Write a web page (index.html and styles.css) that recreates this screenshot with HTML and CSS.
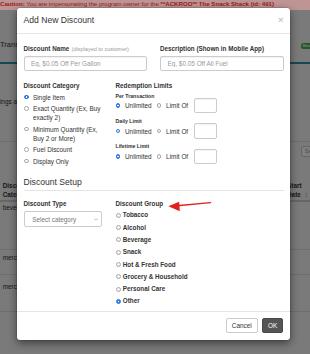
FILE: index.html
```html
<!DOCTYPE html>
<html lang="en">
<head>
  <meta charset="UTF-8" />
  <title>Discounts - Add New Discount</title>
  <link rel="stylesheet" href="styles.css">
</head>
<body>
  <div class="caution"><b>Caution:</b> You are impersonating the program owner for the <b>**ACKROO** The Snack Shack (id: 491)</b></div>
  <div class="tabs">
    <span class="tab">Transactions</span>
    <span class="badge">New</span>
  </div>
  <div class="subbar">Listings and Settings</div>
  <div class="filter">
    <div class="search">Search</div>
  </div>
  <div class="grid-head">
    <div>Discount<br>Category</div>
    <div class="sort">Start<br>Date <span class="sort-icon">&#8597;</span></div>
  </div>
  <div class="grid-row r1">beverage</div>
  <div class="grid-row r2">merchandise</div>
  <div class="grid-row r3">merchandise</div>

  <div class="backdrop"></div>

  <div class="modal">
    <div class="modal-header">
      <div class="modal-title">Add New Discount</div>
      <span class="close">&times;</span>
    </div>
    <div class="modal-body">
      <div class="cols-2">
        <div>
          <label class="field-label">Discount Name <small>(displayed to customer)</small></label>
          <input class="field" type="text" placeholder="Eg, $0.05 Off Per Gallon">
        </div>
        <div>
          <label class="field-label">Description (Shown in Mobile App)</label>
          <input class="field" type="text" placeholder="Eg, $0.05 Off All Fuel">
        </div>
      </div>

      <div class="cols-split">
        <div>
          <label class="field-label">Discount Category</label>
          <div class="radio-list">
            <label class="radio"><input type="radio" name="cat" checked><span>Single Item</span></label>
            <label class="radio"><input type="radio" name="cat"><span>Exact Quantity (Ex, Buy exactly 2)</span></label>
            <label class="radio"><input type="radio" name="cat"><span>Minimum Quantity (Ex, Buy 2 or More)</span></label>
            <label class="radio"><input type="radio" name="cat"><span>Fuel Discount</span></label>
            <label class="radio"><input type="radio" name="cat"><span>Display Only</span></label>
          </div>
        </div>
        <div>
          <label class="field-label">Redemption Limits</label>
          <div class="limits">
            <div class="limit">
              <div class="limit-label">Per Transaction</div>
              <div class="limit-row">
                <label class="inline"><input type="radio" name="per" checked>Unlimited</label>
                <label class="inline"><input type="radio" name="per">Limit Of</label>
                <input class="limit-input" type="text">
              </div>
            </div>
            <div class="limit">
              <div class="limit-label">Daily Limit</div>
              <div class="limit-row">
                <label class="inline"><input type="radio" name="day" checked>Unlimited</label>
                <label class="inline"><input type="radio" name="day">Limit Of</label>
                <input class="limit-input" type="text">
              </div>
            </div>
            <div class="limit">
              <div class="limit-label">Lifetime Limit</div>
              <div class="limit-row">
                <label class="inline"><input type="radio" name="life" checked>Unlimited</label>
                <label class="inline"><input type="radio" name="life">Limit Of</label>
                <input class="limit-input" type="text">
              </div>
            </div>
          </div>
        </div>
      </div>

      <h4 class="section-title">Discount Setup</h4>

      <div class="cols-split">
        <div>
          <label class="field-label">Discount Type</label>
          <div class="select">
            <span>Select category</span>
            <svg width="4" height="3" viewBox="0 0 4 3"><path d="M0.4 0.6 L2 2.2 L3.6 0.6" fill="none" stroke="#8a8a8a" stroke-width="0.6"/></svg>
          </div>
        </div>
        <div>
          <label class="field-label">Discount Group</label>
          <div class="group-list">
            <label class="group-opt"><input type="radio" name="grp"><span>Tobacco</span></label>
            <label class="group-opt"><input type="radio" name="grp"><span>Alcohol</span></label>
            <label class="group-opt"><input type="radio" name="grp"><span>Beverage</span></label>
            <label class="group-opt"><input type="radio" name="grp"><span>Snack</span></label>
            <label class="group-opt"><input type="radio" name="grp"><span>Hot &amp; Fresh Food</span></label>
            <label class="group-opt"><input type="radio" name="grp"><span>Grocery &amp; Household</span></label>
            <label class="group-opt"><input type="radio" name="grp"><span>Personal Care</span></label>
            <label class="group-opt"><input type="radio" name="grp" checked><span>Other</span></label>
          </div>
        </div>
      </div>
    </div>
    <div class="modal-footer">
      <button class="btn">Cancel</button>
      <button class="btn btn-dark">OK</button>
    </div>
  </div>

  <svg class="arrow" width="46" height="14" viewBox="0 0 46 14">
    <line x1="44.5" y1="3.6" x2="11" y2="6.8" stroke="#e3211c" stroke-width="1.4" stroke-linecap="round"/>
    <polygon points="2.3,7.3 13.2,2.8 13.8,12.2" fill="#e3211c"/>
  </svg>
</body>
</html>
```

FILE: styles.css
```css
* {
  box-sizing: border-box;
}
body {
  margin: 0;
  width: 310px;
  height: 354px;
  overflow: hidden;
  position: relative;
  font-family: "Liberation Sans", Arial, sans-serif;
  font-size: 6.4px;
  color: #333;
  background: #f4f4f4;
}

/* page behind the modal */
.caution {
  position: relative;
  z-index: 2;
  height: 9.5px;
  font-size: 6.1px;
  line-height: 7px;
  background: #bf9494;
  color: #951c1c;
  white-space: nowrap;
  overflow: hidden;
}
.tabs {
  height: 54.5px;
  padding-top: 16.5px;
  display: flex;
  justify-content: space-between;
  align-items: center;
  border-bottom: 2px solid #2f93a8;
}
.tab {
  font-size: 7.5px;
  line-height: 9px;
}
.badge {
  background: #4cae4c;
  color: #fff;
  font-size: 4px;
  font-weight: bold;
  padding: 0.5px 2px;
  border-radius: 2.5px;
  margin-right: -3px;
  margin-top: 3px;
}
.subbar {
  height: 78px;
  padding-top: 34px;
  line-height: 8px;
  margin-left: -10px;
  border-bottom: 1px solid #ddd;
}
.filter {
  height: 28px;
  padding-top: 4px;
  display: flex;
  justify-content: flex-end;
}
.search {
  width: 30px;
  height: 11px;
  margin-right: -21px;
  border: 1px solid #ccc;
  border-radius: 2px;
  background: #fff;
  color: #999;
  font-size: 5.5px;
  line-height: 9px;
  padding-left: 3px;
}
.grid-head {
  display: grid;
  grid-template-columns: 1fr 23px;
  height: 32px;
  align-items: end;
  font-weight: bold;
  line-height: 8.8px;
  padding-left: 2.7px;
  border-bottom: 2px solid #ccc;
}
.sort-icon {
  color: #999;
  font-weight: normal;
  margin-left: 2px;
}
.grid-row {
  padding-left: 2.7px;
  line-height: 7px;
  border-bottom: 1px solid #ddd;
}
.r1 {
  height: 48px;
  padding-top: 1.5px;
}
.r2 {
  height: 25px;
  padding-top: 4px;
}
.r3 {
  height: 37px;
  padding-top: 7.5px;
}

.backdrop {
  position: absolute;
  inset: 0;
  background: rgba(0, 0, 0, 0.5);
  z-index: 1;
}

/* modal */
.modal {
  position: absolute;
  left: 17px;
  top: 8px;
  width: 273px;
  background: #fff;
  border-radius: 3px;
  box-shadow: 0 3px 9px rgba(0, 0, 0, 0.5), 0 0 0 0.5px rgba(0, 0, 0, 0.2);
  z-index: 3;
}
.modal-header {
  display: flex;
  justify-content: space-between;
  align-items: center;
  padding: 6.4px 6.5px;
  border-bottom: 1px solid #e5e5e5;
}
.modal-title {
  font-size: 8.6px;
  line-height: 12px;
}
.close {
  font-size: 9.5px;
  font-weight: bold;
  line-height: 12px;
  color: #c8c8c8;
}
.modal-body {
  padding: 10.9px 6.5px 4.8px;
}
.field-label {
  display: block;
  font-size: 6.3px;
  font-weight: bold;
  line-height: 8.7px;
  margin-bottom: 2.2px;
}
.field-label small {
  font-size: 5.5px;
  font-weight: normal;
  color: #999;
  margin-left: 0.6px;
}
.field {
  display: block;
  width: 100%;
  height: 15.4px;
  border: 1px solid #ccc;
  border-radius: 2px;
  padding: 0 6.5px;
  font-family: inherit;
  font-size: 6.4px;
  color: #555;
  box-shadow: inset 0 1px 1px rgba(0, 0, 0, 0.05);
}
.field::placeholder {
  color: #999;
}
.cols-2 {
  display: grid;
  grid-template-columns: 1fr 1fr;
  column-gap: 13px;
  margin-bottom: 10.7px;
}
.cols-split {
  display: grid;
  grid-template-columns: 80px 1fr;
  column-gap: 12px;
}

input[type="radio"] {
  appearance: none;
  margin: 0;
  flex: none;
  width: 4.7px;
  height: 4.7px;
  border: 0.6px solid #a8a8a8;
  border-radius: 50%;
  background: #fff;
}
input[type="radio"]:checked {
  border-color: #2a72e6;
  background: radial-gradient(circle, #fff 0 0.75px, #2f80f2 1px);
}

.radio-list {
  display: flex;
  flex-direction: column;
  gap: 2.5px;
  margin-top: 1.9px;
}
.radio {
  display: flex;
  align-items: flex-start;
  line-height: 9px;
}
.radio input {
  margin: 2.15px 4.15px 0 0.6px;
}

.limits {
  margin-top: 1.2px;
}
.limit + .limit {
  margin-top: 4.5px;
}
.limit-label {
  font-size: 5.2px;
  font-weight: bold;
  line-height: 7px;
}
.limit-row {
  display: flex;
  align-items: center;
  height: 15.4px;
  margin-top: -1.5px;
}
.inline {
  display: flex;
  align-items: center;
  gap: 4.8px;
  margin-right: 5px;
}
.limit-input {
  width: 22.4px;
  height: 15.4px;
  margin-left: 1px;
  border: 1px solid #ccc;
  border-radius: 2px;
  box-shadow: inset 0 1px 1px rgba(0, 0, 0, 0.05);
}

.section-title {
  margin: 11.5px 0 9.1px;
  font-size: 8.6px;
  font-weight: normal;
  line-height: 10px;
  padding-bottom: 3.3px;
  border-bottom: 1px solid #e5e5e5;
}
.select {
  width: 78px;
  height: 15.7px;
  display: flex;
  justify-content: space-between;
  align-items: center;
  padding: 0 3px 0 7.7px;
  border: 1px solid #ccc;
  border-radius: 2px;
  color: #777;
}
.group-list {
  display: flex;
  flex-direction: column;
  gap: 3.5px;
  margin-top: 1.3px;
}
.group-opt {
  display: flex;
  align-items: center;
  line-height: 8.8px;
  font-size: 6.3px;
  font-weight: bold;
}
.group-opt input {
  width: 5px;
  height: 5px;
  margin: -0.8px 2.3px 0 0;
  background: linear-gradient(#fff, #ededed);
  border-color: #a8a8a8;
}
.group-opt input:checked {
  background: radial-gradient(circle, #fff 0 0.75px, #2f80f2 1px);
}

.modal-footer {
  display: flex;
  justify-content: flex-end;
  gap: 4.4px;
  padding: 6.4px 6.7px 6.6px;
  border-top: 1px solid #e5e5e5;
}
.btn {
  height: 15px;
  padding: 0 5px;
  font-family: inherit;
  font-size: 6.4px;
  color: #333;
  background: #fff;
  border: 1px solid #ccc;
  border-radius: 2px;
}
.btn-dark {
  background: #555;
  border-color: #4a4a4a;
  color: #fff;
}

.arrow {
  position: absolute;
  left: 166px;
  top: 199px;
  z-index: 4;
}
```
